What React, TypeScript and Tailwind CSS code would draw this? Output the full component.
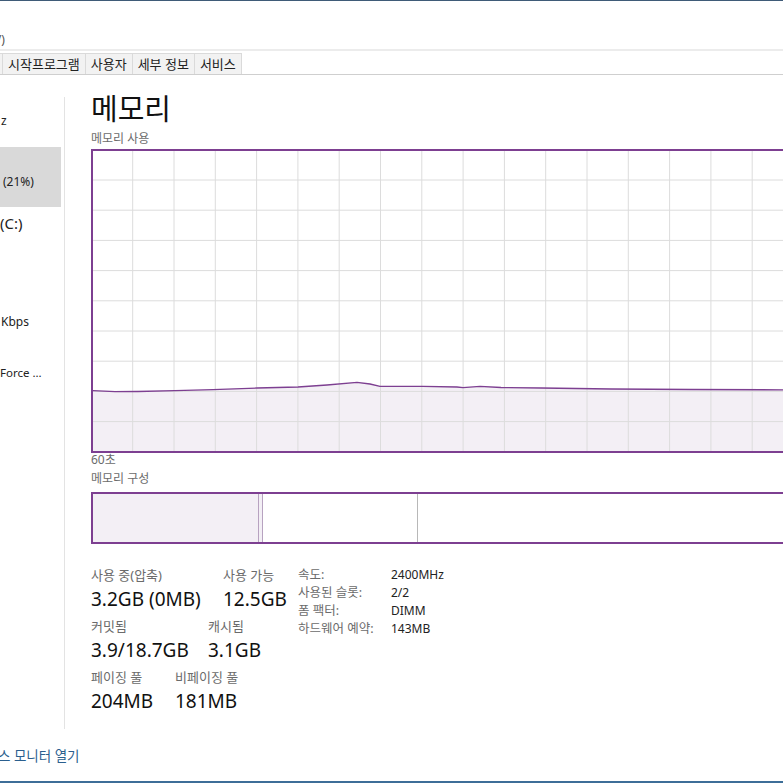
const font = "font-['Noto_Sans','Noto_Sans_CJK_KR',sans-serif]"

const linePts: [number, number][] = [
  [0, 239.7], [22, 240.7], [45, 240.5], [82, 239.7], [120, 238.7], [164, 237], [205, 236],
  [234, 234], [264, 231.3], [277, 233], [287, 235.3], [330, 235.3], [364, 236], [370, 236.7],
  [387, 235.3], [408, 236.5], [448, 237], [518, 238], [598, 238.5], [690, 238.8], [830, 239],
]

function UsageGraph() {
  const w = 824
  const h = 300
  const cols = Array.from({ length: 20 }, (_, i) => 39.7 + 41.3 * i)
  const rows = Array.from({ length: 9 }, (_, i) => 29 + 30.2 * i)
  const line = linePts.map(([x, y]) => `${x},${y}`).join(' ')
  const fill = `0,${h} ${line} ${w + 10},${h}`

  return (
    <div className="w-[828px] h-[304px] shrink-0 border-2 border-[#7d3f91] bg-white">
      <svg width={w} height={h} className="block">
        <polygon points={fill} fill="#f3eff5" />
        {cols.map((x) => (
          <line key={'c' + x} x1={x} y1={0} x2={x} y2={h} stroke="#dcdcdc" strokeWidth={1} />
        ))}
        {rows.map((y) => (
          <line key={'r' + y} x1={0} y1={y} x2={w} y2={y} stroke="#dcdcdc" strokeWidth={1} />
        ))}
        <polyline points={line} fill="none" stroke="#7d3f91" strokeWidth={1.3} />
      </svg>
    </div>
  )
}

function Stat({ label, value, width }: { label: string; value: string; width?: string }) {
  return (
    <div className={width}>
      <div className="text-[13px] leading-[16px] text-[#6b6b6b]">{label}</div>
      <div className="mt-[4px] text-[19px] leading-[24px] text-[#111]">{value}</div>
    </div>
  )
}

export default function App() {
  const tabs = ['시작프로그램', '사용자', '세부 정보', '서비스']
  const specs = [
    ['속도:', '2400MHz'],
    ['사용된 슬롯:', '2/2'],
    ['폼 팩터:', 'DIMM'],
    ['하드웨어 예약:', '143MB'],
  ]

  return (
    <div className={`w-[783px] h-[783px] overflow-hidden bg-white flex flex-col ${font}`}>
      <div className="h-px bg-[#3f5b78] shrink-0" />

      {/* menu */}
      <div className="h-[48px] pt-[31px] shrink-0">
        <span className="block -ml-[6px] text-[12px] leading-[16px] text-[#555]">V)</span>
      </div>
      <div className="h-[2px] bg-[#ececec] shrink-0" />
      <div className="h-[2px] shrink-0" />

      {/* tabs */}
      <div className="h-[22px] flex border-b border-[#cfcfcf] shrink-0">
        <div className="w-[3px] border border-l-0 border-b-0 border-[#dadada] bg-[#f2f2f2]" />
        {tabs.map((t) => (
          <div
            key={t}
            className="px-[5px] border border-l-0 border-b-0 border-[#dadada] bg-[#f2f2f2] text-[13px] leading-[20px] text-[#222]"
          >
            {t}
          </div>
        ))}
      </div>

      {/* body */}
      <div className="h-[664px] flex shrink-0">
        <div className="w-[64px] shrink-0 flex flex-col text-[12px] text-[#222]">
          <div className="h-[12px]" />
          <div className="h-[60px] pt-[26px] leading-[16px] pl-px">z</div>
          <div className="h-[60px] w-[61px] bg-[#d9d9d9] pt-[27px] leading-[16px] pl-[3px]">(21%)</div>
          <div className="h-[30px] pt-[6px] text-[15px] leading-[20px]">(C:)</div>
          <div className="h-[98px] pt-[77px] leading-[16px] pl-px">Kbps</div>
          <div className="h-[40px] pt-[30px] text-[11.5px] leading-[16px]">Force ...</div>
        </div>
        <div className="w-px shrink-0 mt-[22px] h-[632px] bg-[#e3e3e3]" />

        <div className="pl-[26px] flex flex-col">
          <div className="mt-[20px] text-[29px] leading-[28px] text-[#111]">메모리</div>
          <div className="mt-[9px] text-[12px] leading-[14px] text-[#6b6b6b]">메모리 사용</div>
          <div className="mt-[3px]">
            <UsageGraph />
          </div>
          <div className="text-[12px] leading-[14px] text-[#6b6b6b]">60초</div>
          <div className="mt-[5px] text-[12px] leading-[14px] text-[#6b6b6b]">메모리 구성</div>
          <div className="mt-[6px] w-[828px] h-[52px] border-2 border-[#7d3f91] flex">
            <div className="w-[165px] bg-[#f3eff5]" />
            <div className="w-[5px] bg-[#f3eff5] border-x border-[#b7a2c0]" />
            <div className="w-[155px] border-r border-[#b8b8b8]" />
            <div className="flex-1" />
          </div>

          <div className="mt-[23px] flex">
            <div className="w-[207px] flex flex-col gap-[7px]">
              <div className="flex">
                <Stat label="사용 중(압축)" value="3.2GB (0MB)" width="w-[132px]" />
                <Stat label="사용 가능" value="12.5GB" />
              </div>
              <div className="flex">
                <Stat label="커밋됨" value="3.9/18.7GB" width="w-[117px]" />
                <Stat label="캐시됨" value="3.1GB" />
              </div>
              <div className="flex">
                <Stat label="페이징 풀" value="204MB" width="w-[84px]" />
                <Stat label="비페이징 풀" value="181MB" />
              </div>
            </div>
            <div className="-mt-px flex flex-col">
              {specs.map(([k, v]) => (
                <div key={k} className="flex leading-[18px]">
                  <div className="w-[93px] text-[12.5px] text-[#6b6b6b]">{k}</div>
                  <div className="text-[12px] text-[#222]">{v}</div>
                </div>
              ))}
            </div>
          </div>
        </div>
      </div>

      {/* footer */}
      <div className="flex-1 flex flex-col">
        <div className="pt-[9px] -ml-[2px] text-[13.5px] leading-[16px] text-[#2b5f8e]">스 모니터 열기</div>
        <div className="flex-1" />
        <div className="h-[2px] bg-[#3d6e98]" />
      </div>
    </div>
  )
}
